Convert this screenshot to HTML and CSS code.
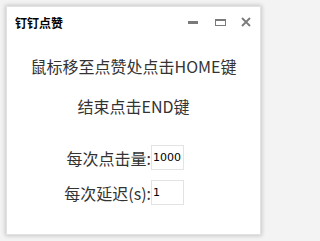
FILE: index.html
```html
<!DOCTYPE html>
<html lang="zh-CN">
<head>
<meta charset="utf-8">
<title>钉钉点赞</title>
<link rel="stylesheet" href="styles.css">
</head>
<body>
<div class="window">
  <div class="titlebar">
    <span class="title">钉钉点赞</span>
    <div class="controls">
      <span class="ctl ctl-min"></span>
      <span class="ctl ctl-max"></span>
      <svg class="ctl-close" width="10" height="10" viewBox="0 0 10 10"><path d="M1 1L9 9M9 1L1 9" stroke="#7a7a7a" stroke-width="1.8" fill="none"/></svg>
    </div>
  </div>
  <div class="content">
    <p class="line line-first">鼠标移至点赞处点击HOME键</p>
    <p class="line line-second">结束点击END键</p>
    <div class="form">
      <label class="lbl">每次点击量:</label>
      <div class="box">1000</div>
      <label class="lbl">每次延迟(s):</label>
      <div class="box">1</div>
    </div>
  </div>
</div>
</body>
</html>
```
FILE: styles.css
```css
html, body {
  margin: 0;
  padding: 0;
}
body {
  width: 269px;
  height: 241px;
  background: #f3f3f3;
  padding: 7px 9px 7px 7px;
  box-sizing: border-box;
  font-family: "Noto Sans CJK SC", "Noto Sans", sans-serif;
}
.window {
  width: 253px;
  height: 227px;
  background: #ffffff;
  box-shadow: 0 0 0 1px #e2e2e2, 0 0 4px 2px rgba(0,0,0,0.18);
  display: flex;
  flex-direction: column;
}
.titlebar {
  height: 30px;
  display: flex;
  align-items: center;
  padding-left: 8px;
  padding-right: 9px;
}
.title {
  font-size: 12px;
  font-weight: bold;
  color: #000;
  flex: 1;
  line-height: 14px;
  margin-top: 1px;
}
.controls {
  display: flex;
  align-items: center;
}
.ctl-min {
  width: 10px;
  height: 3px;
  background: #7a7a7a;
  margin-right: 17px;
  margin-top: 1px;
}
.ctl-max {
  width: 9px;
  height: 4px;
  border: 1px solid #7a7a7a;
  border-top-width: 2px;
  margin-right: 15px;
  margin-top: 0px;
}
.ctl-close {
  display: block;
}
.content {
  display: flex;
  flex-direction: column;
  color: #333;
}
.line {
  margin: 0;
  text-align: center;
  font-size: 16px;
  line-height: 20px;
}
.line-first {
  margin-top: 19px;
}
.line-second {
  margin-top: 20px;
}
.form {
  display: grid;
  grid-template-columns: 144px 33px;
  grid-auto-rows: 25px;
  row-gap: 10px;
  margin-top: 29px;
  align-items: center;
}
.lbl {
  font-size: 16px;
  line-height: 20px;
  text-align: right;
  color: #333;
}
.box {
  box-sizing: border-box;
  height: 25px;
  border: 1px solid #e3e3e3;
  font-family: "DejaVu Sans", sans-serif;
  font-size: 11px;
  color: #000;
  line-height: 23px;
  padding-left: 1px;
}
```
